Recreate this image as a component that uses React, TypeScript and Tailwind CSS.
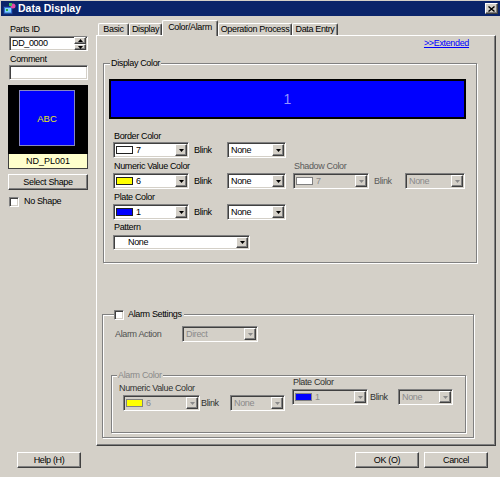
import type { ReactNode } from "react";

const sunken =
  "border border-t-[#808080] border-l-[#808080] border-b-white border-r-white shadow-[inset_1px_1px_0_#404040,inset_-1px_-1px_0_#d4d0c8]";
const raised =
  "border border-t-white border-l-white border-b-[#404040] border-r-[#404040] shadow-[inset_-1px_-1px_0_#808080]";
const etched = "border border-[#808080] shadow-[inset_1px_1px_0_#fff,1px_1px_0_#fff]";

function DropBtn({ disabled, small }: { disabled?: boolean; small?: boolean }) {
  return (
    <span
      className={`ml-auto mr-[1px] flex w-[12px] shrink-0 items-center justify-center bg-[#d4d0c8] ${
        small ? "h-[11px]" : "h-[12px]"
      } ${raised}`}
    >
      <svg width="5" height="3" viewBox="0 0 5 3">
        <path d="M0 0h5L2.5 3z" fill={disabled ? "#8a8a8a" : "#000"} />
      </svg>
    </span>
  );
}

function Combo({
  w,
  value,
  swatch,
  disabled,
  pad = "ml-[3px]",
  small,
}: {
  w: string;
  value: string;
  swatch?: string;
  disabled?: boolean;
  pad?: string;
  small?: boolean;
}) {
  return (
    <div
      className={`flex shrink-0 items-center ${small ? "h-[15px]" : "h-[16px]"} ${w} ${sunken} ${
        disabled ? "bg-[#d4d0c8] text-[#8a8a8a]" : "bg-white text-black"
      }`}
    >
      {swatch ? (
        <span
          className={`ml-[2px] h-[8px] w-[17px] shrink-0 border ${swatch} ${
            disabled ? "border-[#808080]" : "border-[#202020]"
          }`}
        />
      ) : null}
      <span className={pad}>{value}</span>
      <DropBtn disabled={disabled} small={small} />
    </div>
  );
}

function Button({ w, children }: { w: string; children: ReactNode }) {
  return (
    <div className={`flex h-[16px] ${w} items-center justify-center bg-[#d4d0c8] ${raised}`}>
      {children}
    </div>
  );
}

function Check() {
  return <span className={`block h-[10px] w-[10px] shrink-0 bg-white ${sunken}`} />;
}

function Tab({ label, w, active }: { label: string; w: string; active?: boolean }) {
  if (active) {
    return (
      <div
        className={`relative z-10 -mb-[1px] flex h-[16px] ${w} items-start justify-center rounded-t-[2px] border-l border-r border-t border-l-white border-t-white border-r-[#404040] bg-[#d4d0c8] pt-[1px] shadow-[inset_-1px_0_0_#808080]`}
      >
        {label}
      </div>
    );
  }
  return (
    <div
      className={`flex h-[12px] ${w} items-start justify-center rounded-t-[2px] border-l border-r border-t border-l-white border-t-white border-r-[#404040] shadow-[inset_-1px_0_0_#808080]`}
    >
      {label}
    </div>
  );
}

function TitleBar() {
  return (
    <div className="ml-[1px] mt-[1px] flex h-[15px] items-center bg-[#0a246a] text-white">
      <svg className="ml-[2px]" width="13" height="12" viewBox="0 0 13 12">
        <rect x="0.5" y="3.5" width="9" height="7.5" fill="#2f6fd0" stroke="#17307a" />
        <rect x="2" y="5" width="6" height="4.5" fill="#7fd0ff" />
        <rect x="3" y="6" width="2" height="2" fill="#30b040" />
        <circle cx="10" cy="3" r="2.5" fill="#e04aa8" />
        <rect x="6" y="0" width="3" height="3" fill="#3fc060" />
      </svg>
      <span className="ml-[2px] text-[10.5px] font-bold tracking-normal">Data Display</span>
      <div className={`ml-auto mr-[2px] flex h-[11px] w-[13px] items-center justify-center bg-[#d4d0c8] ${raised}`}>
        <svg width="7" height="6" viewBox="0 0 7 6">
          <path d="M0.5 0.5L6.5 5.5M6.5 0.5L0.5 5.5" stroke="#000" strokeWidth="1.4" />
        </svg>
      </div>
    </div>
  );
}

function LeftColumn() {
  return (
    <div className="ml-[8px] mt-[8px] flex w-[80px] flex-col">
      <div className="h-[11px] pl-[2px]">Parts ID</div>
      <div className={`ml-[1px] mt-[1px] flex h-[15px] w-[79px] items-center bg-white pl-[2px] ${sunken}`}>
        <span>DD_0000</span>
        <div className="ml-auto mr-[1px] flex h-[13px] w-[12px] flex-col">
          <span className={`flex h-[7px] items-center justify-center bg-[#d4d0c8] ${raised}`}>
            <svg width="5" height="3" viewBox="0 0 5 3">
              <path d="M0 3h5L2.5 0z" fill="#000" />
            </svg>
          </span>
          <span className={`flex h-[6px] items-center justify-center bg-[#d4d0c8] ${raised}`}>
            <svg width="5" height="3" viewBox="0 0 5 3">
              <path d="M0 0h5L2.5 3z" fill="#000" />
            </svg>
          </span>
        </div>
      </div>
      <div className="mt-[3px] h-[11px] pl-[2px]">Comment</div>
      <div className={`ml-[1px] h-[15px] w-[79px] bg-white ${sunken}`} />
      <div className="mt-[5px] h-[69px] w-[80px] bg-black pl-[11px] pt-[5px]">
        <div className="flex h-[56px] w-[56px] items-center justify-center border border-[#8888c0] bg-[#0000ff] text-[9.5px] tracking-normal text-[#e8e820]">
          ABC
        </div>
      </div>
      <div className="flex h-[15px] w-[80px] items-center justify-center border-x border-b border-[#404040] bg-[#ffffcc] tracking-normal">
        ND_PL001
      </div>
      <div className="mt-[5px]">
        <Button w="w-[80px]">Select Shape</Button>
      </div>
      <div className="mt-[6px] flex items-center">
        <span className="ml-[1px]">
          <Check />
        </span>
        <span className="ml-[5px]">No Shape</span>
      </div>
    </div>
  );
}

function DisplayColor() {
  return (
    <div className={`relative ml-[6px] mt-[14px] w-[374px] pb-[12px] ${etched}`}>
      <div className="absolute -top-[6px] left-[6px] bg-[#d4d0c8] px-[1px]">Display Color</div>
      <div className="ml-[5px] mt-[15px] flex h-[40px] w-[357px] items-center justify-center border-2 border-black bg-[#0000ff] text-[14px] leading-[16px] tracking-normal text-[#9494ff]">
        1
      </div>

      <div className="ml-[10px] mt-[12px] h-[11px]">Border Color</div>
      <div className="ml-[9px] flex h-[16px] items-center">
        <Combo w="w-[76px]" value="7" swatch="bg-white" />
        <span className="w-[38px] pl-[5px]">Blink</span>
        <Combo w="w-[59px]" value="None" />
      </div>

      <div className="ml-[10px] mt-[3px] flex h-[11px]">
        <span className="w-[180px]">Numeric Value Color</span>
        <span className="text-[#5a5a5a]">Shadow Color</span>
      </div>
      <div className="ml-[9px] mt-[1px] flex h-[16px] items-center">
        <Combo w="w-[76px]" value="6" swatch="bg-[#ffff00]" />
        <span className="w-[38px] pl-[5px]">Blink</span>
        <Combo w="w-[59px]" value="None" />
        <span className="ml-[7px]">
          <Combo w="w-[76px]" value="7" swatch="bg-white" disabled />
        </span>
        <span className="w-[36px] pl-[5px] text-[#5a5a5a]">Blink</span>
        <Combo w="w-[60px]" value="None" disabled />
      </div>

      <div className="ml-[10px] mt-[3px] h-[11px]">Plate Color</div>
      <div className="ml-[9px] mt-[1px] flex h-[16px] items-center">
        <Combo w="w-[76px]" value="1" swatch="bg-[#0000ff]" />
        <span className="w-[38px] pl-[5px]">Blink</span>
        <Combo w="w-[59px]" value="None" />
      </div>

      <div className="ml-[10px] mt-[2px] h-[11px]">Pattern</div>
      <div className="ml-[9px] mt-[2px]">
        <Combo w="w-[137px]" value="None" pad="ml-[14px]" small />
      </div>
    </div>
  );
}

function AlarmSettings() {
  return (
    <div className={`relative ml-[5px] mt-[51px] h-[124px] w-[372px] ${etched}`}>
      <div className="absolute -top-[6px] left-[11px] flex h-[11px] items-center bg-[#d4d0c8] pr-[2px]">
        <Check />
        <span className="ml-[4px]">Alarm Settings</span>
      </div>
      <div className="mt-[11px] flex h-[16px] items-center">
        <span className="w-[79px] pl-[12px] text-[#505050]">Alarm Action</span>
        <Combo w="w-[76px]" value="Direct" disabled />
      </div>

      <div className={`relative ml-[8px] mt-[33px] flex h-[58px] w-[355px] items-start ${etched}`}>
        <div className="absolute -top-[6px] left-[5px] bg-[#d4d0c8] px-[1px] text-[#8a8a8a]">Alarm Color</div>
        <div className="ml-[7px] mt-[7px] flex flex-col">
          <span className="h-[11px] text-[#303030]">Numeric Value Color</span>
          <div className="mt-[1px] flex h-[16px] items-center pl-[4px]">
            <Combo w="w-[77px]" value="6" swatch="bg-[#ffff00]" disabled />
            <span className="w-[30px] pl-[1px] text-[#303030]">Blink</span>
            <Combo w="w-[55px]" value="None" disabled />
          </div>
        </div>
        <div className="ml-[7px] mt-[1px] flex flex-col">
          <span className="h-[11px] pl-[1px] text-[#303030]">Plate Color</span>
          <div className="mt-[1px] flex h-[16px] items-center">
            <Combo w="w-[76px]" value="1" swatch="bg-[#0000ff]" disabled />
            <span className="w-[30px] pl-[2px] text-[#303030]">Blink</span>
            <Combo w="w-[55px]" value="None" disabled />
          </div>
        </div>
      </div>
    </div>
  );
}

function TabArea() {
  return (
    <div className="ml-[8px] mt-[4px] flex w-[400px] flex-col">
      <div className="flex h-[15px] items-end pl-[2px]">
        <Tab label="Basic" w="w-[31px]" />
        <Tab label="Display" w="w-[33px]" />
        <Tab label="Color/Alarm" w="w-[56px]" active />
        <Tab label="Operation Process" w="w-[74px]" />
        <Tab label="Data Entry" w="w-[46px]" />
      </div>
      <div className="h-[411px] border border-l-white border-t-white border-r-[#404040] border-b-[#404040] shadow-[inset_-1px_-1px_0_#808080]">
        <div className="mt-[2px] flex h-[11px] justify-end pr-[26px]">
          <span className="text-[#0000ff] underline">&gt;&gt;Extended</span>
        </div>
        <DisplayColor />
        <AlarmSettings />
      </div>
    </div>
  );
}

export default function App() {
  return (
    <div className="flex h-[477px] w-[500px] flex-col overflow-hidden bg-[#d4d0c8] font-['Liberation_Sans',Arial,sans-serif] text-[9px] leading-[11px] tracking-[-0.35px] text-black">
      <TitleBar />
      <div className="flex">
        <LeftColumn />
        <TabArea />
      </div>
      <div className="mt-[6px] flex">
        <div className="ml-[17px]">
          <Button w="w-[64px]">Help (H)</Button>
        </div>
        <div className="ml-[274px]">
          <Button w="w-[64px]">OK (O)</Button>
        </div>
        <div className="ml-[5px]">
          <Button w="w-[64px]">Cancel</Button>
        </div>
      </div>
    </div>
  );
}
